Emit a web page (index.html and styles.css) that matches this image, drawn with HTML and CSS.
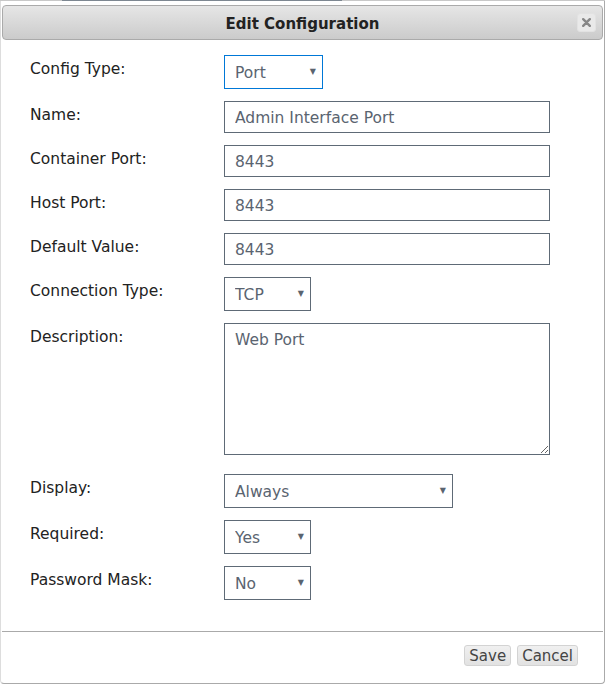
FILE: index.html
```html
<!DOCTYPE html>
<html lang="en">
<head>
    <meta charset="UTF-8">
    <meta name="viewport" content="width=device-width, initial-scale=1.0">
    <title>Edit Configuration</title>
    <link rel="stylesheet" href="styles.css">
</head>
<body>
    <div class="page-edge"><span class="page-edge-bar"></span></div>
    <div class="dialog">
        <div class="dialog-title">
            <span class="dialog-title-text">Edit Configuration</span>
            <button type="button" class="close-button" title="Close">
                <svg width="9" height="9" viewBox="0 0 9 9">
                    <path d="M1.2 1.2 L7.8 7.8 M7.8 1.2 L1.2 7.8" stroke="#878787" stroke-width="2.4" stroke-linecap="round"/>
                </svg>
            </button>
        </div>

        <form class="config-form" id="configForm">
            <div class="form-row">
                <label for="configType">Config Type:</label>
                <span class="select-wrap focused small">
                    <select id="configType">
                        <option>Port</option>
                        <option>Variable</option>
                        <option>Path</option>
                    </select>
                </span>
            </div>

            <div class="form-row">
                <label for="name">Name:</label>
                <input type="text" id="name" value="Admin Interface Port">
            </div>

            <div class="form-row">
                <label for="containerPort">Container Port:</label>
                <input type="text" id="containerPort" value="8443">
            </div>

            <div class="form-row">
                <label for="hostPort">Host Port:</label>
                <input type="text" id="hostPort" value="8443">
            </div>

            <div class="form-row">
                <label for="defaultValue">Default Value:</label>
                <input type="text" id="defaultValue" value="8443">
            </div>

            <div class="form-row">
                <label for="connectionType">Connection Type:</label>
                <span class="select-wrap tiny">
                    <select id="connectionType">
                        <option>TCP</option>
                        <option>UDP</option>
                    </select>
                </span>
            </div>

            <div class="form-row textarea-row">
                <label for="description">Description:</label>
                <textarea id="description">Web Port</textarea>
            </div>

            <div class="form-row">
                <label for="display">Display:</label>
                <span class="select-wrap wide">
                    <select id="display">
                        <option>Always</option>
                        <option>Advanced</option>
                        <option>Never</option>
                    </select>
                </span>
            </div>

            <div class="form-row">
                <label for="required">Required:</label>
                <span class="select-wrap tiny">
                    <select id="required">
                        <option>Yes</option>
                        <option>No</option>
                    </select>
                </span>
            </div>

            <div class="form-row">
                <label for="passwordMask">Password Mask:</label>
                <span class="select-wrap tiny">
                    <select id="passwordMask">
                        <option>No</option>
                        <option>Yes</option>
                    </select>
                </span>
            </div>
        </form>

        <div class="button-pane">
            <button type="button" class="pane-button">Save</button>
            <button type="button" class="pane-button">Cancel</button>
        </div>
    </div>
</body>
</html>
```

FILE: styles.css
```css
/* styles.css */
body {
    font-family: "DejaVu Sans", Verdana, sans-serif;
    background-color: #fff;
    margin: 0;
    padding: 0;
}

.page-edge {
    height: 1px;
    background-color: #c8c8c8;
    display: flex;
}

.page-edge-bar {
    margin-left: 62px;
    width: 280px;
    background-color: #7d8791;
}

.dialog {
    box-sizing: border-box;
    width: 605px;
    height: 683px;
    border: 1px solid #aaa;
    border-top: none;
    border-left-color: #ddd;
    border-radius: 0 0 4px 4px;
    background-color: #fff;
    display: flex;
    flex-direction: column;
}

.dialog-title {
    margin: 4px 1px 0 1px;
    height: 35px;
    box-sizing: border-box;
    padding-top: 2px;
    border: 1px solid #aaa;
    border-radius: 4px;
    background: linear-gradient(#e6e6e6, #cbcbcb);
    display: flex;
    align-items: center;
    justify-content: center;
    position: relative;
}

.dialog-title-text {
    font-weight: bold;
    font-size: 15px;
    color: #222;
}

.close-button {
    position: absolute;
    right: 6px;
    top: 7px;
    width: 19px;
    height: 19px;
    padding: 0;
    border: 1px solid #e2e2e2;
    border-radius: 3px;
    background-color: #e9e9e9;
    display: flex;
    align-items: center;
    justify-content: center;
    cursor: pointer;
}

.config-form {
    padding: 15px 0 0 29px;
    flex: 1;
}

.form-row {
    display: flex;
    align-items: flex-start;
    margin-bottom: 12px;
}

.form-row label {
    width: 194px;
    flex-shrink: 0;
    padding-top: 5px;
    font-size: 15.5px;
    line-height: 19px;
    color: #222;
}

.form-row input,
.form-row textarea,
.form-row select {
    font-family: "DejaVu Sans", Verdana, sans-serif;
    font-size: 15.5px;
    color: #5a6470;
    border: 1px solid #5e6a76;
    border-radius: 0;
    background-color: #fff;
    box-sizing: border-box;
    outline: none;
    margin: 0;
}

.form-row input {
    width: 326px;
    height: 32px;
    padding: 1px 10px 0;
}

.textarea-row {
    margin-bottom: 19px;
}

.form-row textarea {
    width: 326px;
    height: 132px;
    padding: 7px 10px;
    display: block;
}

.select-wrap {
    position: relative;
    display: inline-block;
}

.select-wrap::after {
    content: "\25BC";
    position: absolute;
    right: 7px;
    top: 12px;
    font-size: 8px;
    color: #5a6470;
    pointer-events: none;
}

.form-row select {
    -webkit-appearance: none;
    appearance: none;
    height: 34px;
    padding: 2px 10px 0;
    display: block;
}

.select-wrap.small select {
    width: 99px;
}

.select-wrap.tiny select {
    width: 87px;
}

.select-wrap.wide select {
    width: 229px;
}

.select-wrap.focused select {
    border-color: #0078d7;
}

.button-pane {
    margin: 0 1px 17px 1px;
    border-top: 1px solid #aaa;
    padding-top: 13px;
    padding-right: 25px;
    display: flex;
    justify-content: flex-end;
    gap: 6px;
}

.pane-button {
    font-family: "DejaVu Sans", Verdana, sans-serif;
    font-size: 15px;
    color: #444;
    height: 21px;
    padding: 0 4px;
    border: 1px solid #d3d3d3;
    border-radius: 3px;
    background: linear-gradient(#f0f0f0, #e2e2e2);
    cursor: pointer;
}
```
